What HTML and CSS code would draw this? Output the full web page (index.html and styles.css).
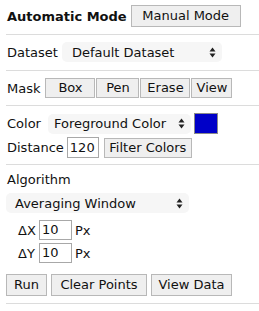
FILE: index.html
```html
<!DOCTYPE html>
<html lang="en">
<head>
  <link rel="stylesheet" href="styles.css">
</head>
<body>
  <div class="panel">
    <div class="row mode-row">
      <span class="mode-title">Automatic Mode</span>
      <button class="btn tall mode-btn">Manual Mode</button>
    </div>
    <hr>
    <div class="row">
      <span class="label">Dataset</span>
      <div class="select dataset-select">
        <span>Default Dataset</span>
        <svg class="arrows" width="7" height="11" viewBox="0 0 7 11"><path d="M3.5 0.5 L6.5 4.5 L0.5 4.5 Z M3.5 10.5 L6.5 6.5 L0.5 6.5 Z" fill="#222"/></svg>
      </div>
    </div>
    <hr class="after-dataset">
    <div class="row">
      <span class="label">Mask</span>
      <div class="btn-group">
        <button class="btn w-box">Box</button>
        <button class="btn w-pen">Pen</button>
        <button class="btn w-erase">Erase</button>
        <button class="btn w-view">View</button>
      </div>
    </div>
    <hr>
    <div class="row color-row">
      <span class="label">Color</span>
      <div class="select color-select">
        <span>Foreground Color</span>
        <svg class="arrows" width="7" height="11" viewBox="0 0 7 11"><path d="M3.5 0.5 L6.5 4.5 L0.5 4.5 Z M3.5 10.5 L6.5 6.5 L0.5 6.5 Z" fill="#222"/></svg>
      </div>
      <div class="swatch"></div>
    </div>
    <div class="row distance-row">
      <span class="label">Distance</span>
      <div class="input dist-input">120</div>
      <button class="btn filter-btn">Filter Colors</button>
    </div>
    <hr class="after-distance">
    <div class="algo-label">Algorithm</div>
    <div class="select algo-select">
      <span>Averaging Window</span>
      <svg class="arrows" width="7" height="11" viewBox="0 0 7 11"><path d="M3.5 0.5 L6.5 4.5 L0.5 4.5 Z M3.5 10.5 L6.5 6.5 L0.5 6.5 Z" fill="#222"/></svg>
    </div>
    <div class="row delta-row dx">
      <span class="delta">ΔX</span>
      <div class="input delta-input">10</div>
      <span class="unit">Px</span>
    </div>
    <div class="row delta-row dy">
      <span class="delta">ΔY</span>
      <div class="input delta-input">10</div>
      <span class="unit">Px</span>
    </div>
    <div class="row run-row">
      <button class="btn tall w-run">Run</button>
      <button class="btn tall w-clear">Clear Points</button>
      <button class="btn tall w-data">View Data</button>
    </div>
    <hr>
  </div>
</body>
</html>
```

FILE: styles.css
```css
body {
    margin: 0;
    padding: 0;
    background: #fff;
    font-family: "DejaVu Sans", Verdana, sans-serif;
    font-size: 13px;
    color: #111;
}
.panel {
    padding: 5px 0 0 6px;
}
.row {
    display: flex;
    align-items: center;
}
hr {
    border: none;
    border-top: 1px solid #dcdcdc;
    margin: 7px 0 7px 0;
    height: 0;
}
hr.after-dataset {
    margin-top: 8px;
}
hr.after-distance {
    margin-top: 6px;
}
.label {
    padding-left: 1px;
}
.btn {
    font-family: inherit;
    font-size: 13px;
    color: #111;
    background: #efefef;
    border: 1px solid #b8b8b8;
    border-radius: 0;
    height: 20px;
    padding: 0;
    margin: 0;
    line-height: 18px;
}
.btn.tall {
    height: 22px;
}
.mode-row {
    height: 22px;
}
.mode-title {
    font-weight: bold;
    padding-left: 1px;
}
.mode-btn {
    margin-left: 4px;
    width: 110px;
}
.select {
    display: flex;
    align-items: center;
    justify-content: space-between;
    background: #f6f6f6;
    border-radius: 5px;
    height: 20px;
    box-sizing: border-box;
}
.arrows {
    display: block;
}
.dataset-select {
    margin-left: 4px;
    width: 160px;
    padding: 0 6px 0 10px;
}
.btn-group {
    display: flex;
    gap: 1px;
    margin-left: 5px;
}
.w-box { width: 50px; }
.w-pen { width: 43px; }
.w-erase { width: 50px; }
.w-view { width: 41px; }
.color-row {
    height: 21px;
}
.color-select {
    margin-left: 7px;
    width: 143px;
    padding: 0 6px 0 6px;
}
.swatch {
    width: 22px;
    height: 19px;
    margin-left: 3px;
    background: #0000c8;
    border: 1px solid #8a8a8a;
}
.distance-row {
    margin-top: 3px;
    height: 21px;
}
.input {
    box-sizing: border-box;
    border: 1px solid #a8a8a8;
    height: 21px;
    line-height: 19px;
    padding-left: 2px;
    background: #fff;
}
.dist-input {
    width: 32px;
    margin-left: 3px;
}
.filter-btn {
    margin-left: 5px;
    width: 88px;
}
.algo-label {
    padding-left: 1px;
    height: 16px;
    line-height: 16px;
}
.algo-select {
    margin-top: 5px;
    width: 183px;
    padding: 0 6px 0 9px;
}
.delta-row {
    height: 20px;
}
.dx {
    margin-top: 7px;
}
.dy {
    margin-top: 3px;
}
.delta {
    padding-left: 12px;
    width: 21px;
}
.delta-input {
    width: 33px;
    height: 20px;
    line-height: 18px;
}
.unit {
    margin-left: 3px;
}
.run-row {
    margin-top: 11px;
    gap: 4px;
}
.w-run { width: 41px; }
.w-clear { width: 96px; }
.w-data { width: 81px; }
```
